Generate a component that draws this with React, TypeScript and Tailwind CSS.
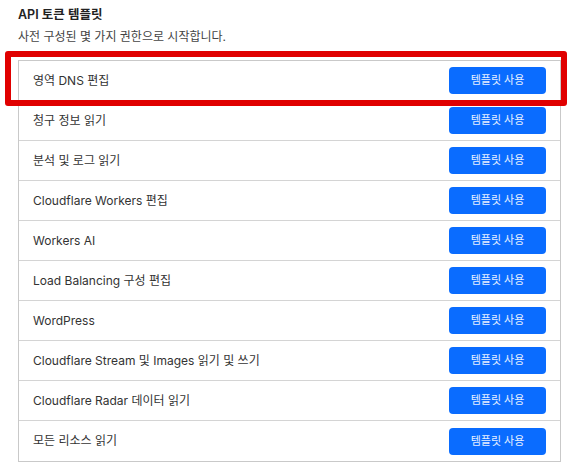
const templates = [
  '영역 DNS 편집',
  '청구 정보 읽기',
  '분석 및 로그 읽기',
  'Cloudflare Workers 편집',
  'Workers AI',
  'Load Balancing 구성 편집',
  'WordPress',
  'Cloudflare Stream 및 Images 읽기 및 쓰기',
  'Cloudflare Radar 데이터 읽기',
  '모든 리소스 읽기',
]

export default function App() {
  return (
    <div className="min-h-[469px] w-[572px] bg-white font-['Inter','Noto_Sans_CJK_KR',sans-serif] text-[#222]">
      <div className="px-[18px] pt-[6px]">
        <h2 className="text-[12.5px] font-semibold leading-[18px]">API 토큰 템플릿</h2>
        <p className="mt-[4px] text-[12px] leading-[18px] text-[#444]">
          사전 구성된 몇 가지 권한으로 시작합니다.
        </p>
      </div>

      <div className="relative mx-[18px] mt-[14px] w-[543px]">
        <div className="border border-[#c9c9c9]">
          {templates.map((name, i) => (
            <TemplateRow key={name} name={name} last={i === templates.length - 1} />
          ))}
        </div>
        {/* highlight around the first row */}
        <div className="pointer-events-none absolute -left-[13px] -top-[9px] h-[55px] w-[562px] rounded-[3px] border-[6px] border-[#e00000]" />
      </div>
    </div>
  )
}

function TemplateRow({ name, last }: { name: string; last: boolean }) {
  return (
    <div
      className={`flex h-[40px] items-center justify-between pl-[14px] pr-[14px] ${
        last ? '' : 'border-b border-[#d4d4d4]'
      }`}
    >
      <span className="text-[12px] text-[#333]">{name}</span>
      <button className="h-[27px] w-[97px] rounded-[4px] bg-[#0a6cff] text-[11px] text-white/90">
        템플릿 사용
      </button>
    </div>
  )
}
